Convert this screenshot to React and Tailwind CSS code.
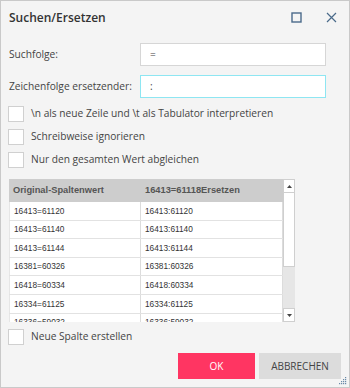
import React from "react";

const rows = [
  ["16413=61120", "16413:61120"],
  ["16413=61140", "16413:61140"],
  ["16413=61144", "16413:61144"],
  ["16381=60326", "16381:60326"],
  ["16418=60334", "16418:60334"],
  ["16334=61125", "16334:61125"],
  ["16336=59032", "16336:59032"],
];

const options = [
  "\\n als neue Zeile und \\t als Tabulator interpretieren",
  "Schreibweise ignorieren",
  "Nur den gesamten Wert abgleichen",
];

function Checkbox({ label, className = "" }) {
  return (
    <label className={`flex items-center h-4 ${className}`}>
      <span className="w-4 h-4 bg-white border border-[#d0d0d0] shrink-0" />
      <span className="ml-[7px] text-[10.2px] text-[#444]">{label}</span>
    </label>
  );
}

export default function App() {
  return (
    <div
      className="w-[350px] h-[388px] border border-[#c9c9c9] bg-[#f4f4f4] flex flex-col relative"
      style={{ fontFamily: '"Open Sans", "Noto Sans", sans-serif' }}
    >
      {/* Title bar */}
      <div className="h-[33px] flex items-center pl-2 pr-3">
        <h1 className="text-[12px] font-semibold text-[#333] flex-1">Suchen/Ersetzen</h1>
        <svg width="11" height="11" viewBox="0 0 11 11" className="mr-[24px]">
          <rect x="1" y="1" width="9" height="9" fill="none" stroke="#4a6a8a" strokeWidth="1.4" />
        </svg>
        <svg width="11" height="11" viewBox="0 0 11 11">
          <path d="M1 1 L10 10 M10 1 L1 10" stroke="#4a6a8a" strokeWidth="1.2" />
        </svg>
      </div>

      {/* Inputs */}
      <div className="mt-[9px] pl-2 flex items-center h-[23px]">
        <span className="w-[131px] text-[10.2px] text-[#444]">Suchfolge:</span>
        <div className="w-[186px] h-[23px] bg-white border border-[#d6d6d6] flex items-center pl-[9px] text-[10.2px] text-[#444]">
          =
        </div>
      </div>
      <div className="mt-[9px] pl-2 flex items-center h-[23px]">
        <span className="w-[131px] text-[10.2px] text-[#444]">Zeichenfolge ersetzender:</span>
        <div className="w-[186px] h-[23px] bg-white border border-[#8ee6f2] flex items-center pl-[9px] text-[10.2px] text-[#444]">
          :
        </div>
      </div>

      {/* Options */}
      <div className="mt-[8px] pl-[7px] flex flex-col gap-[7px]">
        {options.map((o) => (
          <Checkbox key={o} label={o} />
        ))}
      </div>

      {/* Table */}
      <div className="mt-[11px] ml-2 flex w-[286px] h-[143px]">
        <div className="w-[274px] flex flex-col overflow-hidden" style={{ fontFamily: '"Liberation Sans", Arial, sans-serif' }}>
          <div className="h-[23px] bg-[#cdcdcd] flex items-center shrink-0 text-[9.3px] font-bold text-[#555]">
            <div className="w-[132px] pl-1">Original-Spaltenwert</div>
            <div className="flex-1 pl-1">16413=61118Ersetzen</div>
          </div>
          {rows.map(([a, b]) => (
            <div key={a} className="h-[18.6px] shrink-0 flex bg-white border-b border-[#e2e2e2] text-[8.3px] text-[#333]">
              <div className="w-[132px] pl-1 flex items-center border-r border-[#dcdcdc] border-l border-l-[#e6e6e6]">{a}</div>
              <div className="flex-1 pl-1 flex items-center border-r border-[#dcdcdc]">{b}</div>
            </div>
          ))}
        </div>
        <div className="w-[12px] flex flex-col bg-[#e6e6e6]">
          <div className="h-[14px] bg-white border border-[#cfcfcf] flex items-center justify-center">
            <svg width="5" height="3" viewBox="0 0 5 3"><path d="M0 3 L2.5 0 L5 3 Z" fill="#444" /></svg>
          </div>
          <div className="h-[74px] bg-white border-x border-b border-[#cfcfcf]" />
          <div className="flex-1" />
          <div className="h-[14px] bg-white border border-[#cfcfcf] flex items-center justify-center">
            <svg width="5" height="3" viewBox="0 0 5 3"><path d="M0 0 L2.5 3 L5 0 Z" fill="#444" /></svg>
          </div>
        </div>
      </div>

      {/* New column */}
      <Checkbox label="Neue Spalte erstellen" className="mt-[7px] ml-[7px]" />

      {/* Buttons */}
      <div className="mt-[8px] flex justify-end pr-2 gap-[4px]">
        <button className="w-[77px] h-[26px] bg-[#ff3562] text-white text-[10px]">OK</button>
        <button className="w-[82px] h-[26px] bg-[#dcdcdc] text-[#444] text-[10px]">ABBRECHEN</button>
      </div>

      {/* Resize grip */}
      <svg width="8" height="8" viewBox="0 0 8 8" className="absolute right-[2px] bottom-[2px]">
        <rect x="6" y="0" width="1.2" height="1.2" fill="#6a8aa8" />
        <rect x="4" y="2" width="1.2" height="1.2" fill="#6a8aa8" />
        <rect x="6" y="2" width="1.2" height="1.2" fill="#6a8aa8" />
        <rect x="2" y="4" width="1.2" height="1.2" fill="#6a8aa8" />
        <rect x="4" y="4" width="1.2" height="1.2" fill="#6a8aa8" />
        <rect x="6" y="4" width="1.2" height="1.2" fill="#6a8aa8" />
        <rect x="0" y="6" width="1.2" height="1.2" fill="#6a8aa8" />
        <rect x="2" y="6" width="1.2" height="1.2" fill="#6a8aa8" />
        <rect x="4" y="6" width="1.2" height="1.2" fill="#6a8aa8" />
        <rect x="6" y="6" width="1.2" height="1.2" fill="#6a8aa8" />
      </svg>
    </div>
  );
}
